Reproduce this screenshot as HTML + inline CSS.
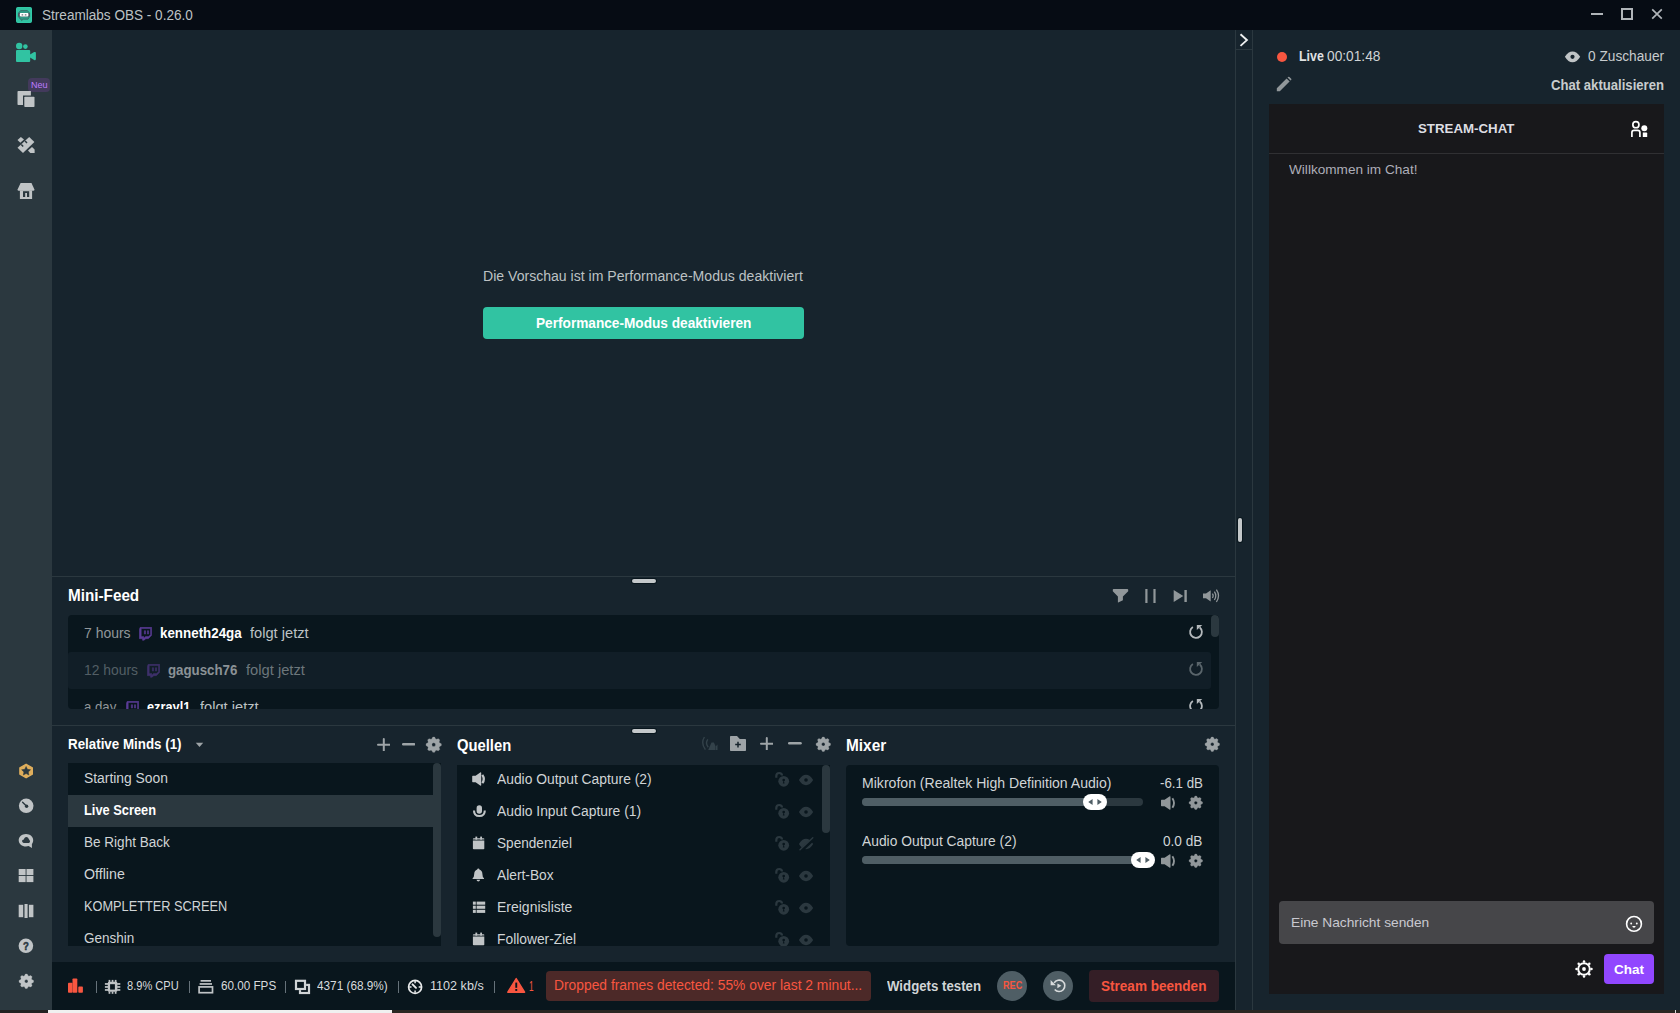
<!DOCTYPE html>
<html lang="de"><head><meta charset="utf-8"><title>Streamlabs OBS - 0.26.0</title>
<style>
html,body{margin:0;padding:0;}
body{width:1680px;height:1013px;overflow:hidden;background:#17242d;position:relative;font-family:"Liberation Sans",sans-serif;}
.b{position:absolute;display:block;}
.t{position:absolute;display:block;white-space:nowrap;transform-origin:0 50%;}
.clip{position:absolute;overflow:hidden;}
</style></head><body>
<main>
<div class="b" style="left:0px;top:0px;width:1680px;height:30px;background:#060c14;"></div>
<div class="b" style="left:0px;top:30px;width:52px;height:980px;background:#2b383f;"></div>
<div class="b" style="left:52px;top:576px;width:1183px;height:1px;background:#2b383f;"></div>
<div class="b" style="left:52px;top:725px;width:1183px;height:1px;background:#2b383f;"></div>
<div class="b" style="left:1235px;top:30px;width:1px;height:980px;background:#2b383f;"></div>
<div class="b" style="left:1252px;top:30px;width:1px;height:980px;background:#2b383f;"></div>
<div class="b" style="left:1235px;top:49px;width:17px;height:1px;background:#2b383f;"></div>
<div class="b" style="left:631px;top:578px;width:26px;height:6px;background:#09161d;border-radius:3px;"></div>
<div class="b" style="left:632px;top:579px;width:24px;height:4px;background:#c4c8ca;border-radius:2px;"></div>
<div class="b" style="left:631px;top:728px;width:26px;height:6px;background:#09161d;border-radius:3px;"></div>
<div class="b" style="left:632px;top:729px;width:24px;height:4px;background:#c4c8ca;border-radius:2px;"></div>
<div class="b" style="left:1237px;top:517px;width:6px;height:26px;background:#09161d;border-radius:3px;"></div>
<div class="b" style="left:1238px;top:518px;width:4px;height:24px;background:#c4c8ca;border-radius:2px;"></div>
<div class="b" style="left:52px;top:962px;width:1183px;height:48px;background:#09161d;"></div>
<div class="b" style="left:0px;top:1010px;width:1680px;height:3px;background:#2a2622;"></div>
<div class="b" style="left:0px;top:1010px;width:48px;height:3px;background:#222222;"></div>
<div class="b" style="left:48px;top:1010px;width:344px;height:3px;background:#f0f0f0;"></div>
<div class="b" style="left:1675px;top:1010px;width:1px;height:3px;background:#d8d8d8;"></div>
<span class="t" style="left:483.35px;top:267.15px;font-size:14px;line-height:18px;color:#bdc2c4;transform:scaleX(1.0052);">Die Vorschau ist im Performance-Modus deaktiviert</span>
<div class="b" style="left:483px;top:307px;width:321px;height:32px;background:#31c3a2;border-radius:4px;"></div>
<span class="t" style="left:535.85px;top:314.15px;font-size:14px;line-height:18px;color:#ffffff;transform:scaleX(0.9748);font-weight:700;">Performance-Modus deaktivieren</span>
</main>
<header>
<svg class="b" style="left:16.0px;top:7.0px;" width="16" height="16" viewBox="0 0 16 16"><rect x="0" y="0" width="16" height="16" rx="2" fill="#35d0ad"/><rect x="0.6" y="0.6" width="14.8" height="14.8" rx="1.6" fill="#31c3a2"/><path d="M4.6 3.6h6.8l2.2 2.4v3.6l-1.6 2.6H7.2L5.6 13.6 5.2 12.2H4.4L2.4 9.6V6z" fill="#2e9985" stroke="#3a5a5c" stroke-width="0.7"/><rect x="2.2" y="6" width="11.6" height="3.6" rx="1.2" fill="#4a5560"/><rect x="3.8" y="6.1" width="8.6" height="3.3" rx="0.8" fill="#ffffff"/><path d="M5.6 7.2h1.6v1.2H5.6zM8.8 7.2h1.6v1.2H8.8z" fill="#6a7278"/></svg>
<span class="t" style="left:41.80px;top:6.15px;font-size:14px;line-height:18px;color:#bdc2c4;transform:scaleX(0.9690);">Streamlabs OBS - 0.26.0</span>
<div class="b" style="left:1591px;top:13px;width:12px;height:2px;background:#b0b5b9;"></div>
<div class="b" style="left:1621px;top:8px;width:8px;height:8px;border:2px solid #b0b5b9;"></div>
<svg class="b" style="left:1650.0px;top:7.0px;" width="14" height="14" viewBox="0 0 14 14"><path d="M2.2 2.4L11.8 11.6M11.8 2.4L2.2 11.6" stroke="#b0b5b9" stroke-width="1.7" fill="none"/></svg>
</header>
<nav>
<svg class="b" style="left:14.0px;top:40.0px;" width="24" height="24" viewBox="14 40 24 24"><circle cx="19.2" cy="46" r="3.2" fill="#31c3a2"/><circle cx="25.4" cy="46.6" r="2.3" fill="#31c3a2"/><rect x="16" y="50" width="14.2" height="12" rx="1" fill="#31c3a2"/><path d="M30 54.6L34.2 52.1Q35.9 51.4 35.9 53V59Q35.9 60.7 34.2 59.9L30 57.4Z" fill="#31c3a2"/></svg>
<div class="b" style="left:28px;top:78px;width:22px;height:14px;background:#433a5c;border-radius:4px;"></div>
<span class="t" style="left:30.50px;top:78.71px;font-size:9.5px;line-height:12px;color:#bd7bff;transform:scaleX(0.9528);">Neu</span>
<svg class="b" style="left:16.0px;top:90.0px;" width="20" height="18" viewBox="16 90 20 18"><path d="M18.3 91H30.9V95.6H23V105H18.3Q17.5 105 17.5 104.2V91.8Q17.5 91 18.3 91Z" fill="#c0c4c6"/><rect x="24.3" y="96.8" width="10.2" height="10.2" rx="0.8" fill="#c0c4c6"/></svg>
<svg class="b" style="left:16.0px;top:135.0px;" width="20" height="20" viewBox="16 135 20 20"><path d="M17.5 147.7L29.200 136.900L34.400 141.900L23 152.900Z" fill="#c0c4c6"/><path d="M21.300 144.600L23.200 146.600M25.100 140.900L27 142.900" stroke="#2b383f" stroke-width="1.5" fill="none"/><path d="M17.500 140L20.900 136.900L24 139.500L20.300 142.700Z" fill="#c0c4c6"/><path d="M28 150.500L32 147L34.600 149.600V153H30.300Z" fill="#c0c4c6"/></svg>
<svg class="b" style="left:16.0px;top:182.0px;" width="20" height="18" viewBox="16 182 20 18"><path d="M20.600 182.900H31.500L34.300 189.200Q34.700 190.800 33.200 190.800H18.800Q17.300 190.800 17.700 189.200Z" fill="#c0c4c6"/><rect x="19.900" y="190.400" width="12.200" height="8.600" fill="#c0c4c6"/><rect x="23" y="191.200" width="6.200" height="5.800" fill="#2b383f"/><rect x="25.200" y="193" width="1.800" height="4.200" fill="#c0c4c6"/></svg>
<svg class="b" style="left:17.0px;top:762.0px;" width="18" height="18" viewBox="17 762 18 18"><polygon points="26.1,764.3 32.3,767.8 32.3,774.2 26.1,777.7 19.9,774.2 19.9,767.8" fill="#dfae5c" stroke="#dfae5c" stroke-width="1.4" stroke-linejoin="round"/><polygon points="26.10,766.50 27.45,769.34 30.57,769.75 28.29,771.91 28.86,775.00 26.10,773.50 23.34,775.00 23.91,771.91 21.63,769.75 24.75,769.34" fill="#2b383f" stroke="#2b383f" stroke-width="0.5" stroke-linejoin="round"/></svg>
<svg class="b" style="left:17.0px;top:797.0px;" width="18" height="18" viewBox="17 797 18 18"><circle cx="26.2" cy="805.8" r="7.3" fill="#c0c4c6"/><circle cx="26.6" cy="806.3" r="1.7" fill="#2b383f"/><path d="M26.6 806.3L22.6 802.3" stroke="#2b383f" stroke-width="1.4" stroke-linecap="round"/></svg>
<svg class="b" style="left:17.0px;top:832.0px;" width="18" height="18" viewBox="17 832 18 18"><path d="M26 833.9C30.100 833.900 33.200 836.700 33.200 840.200C33.200 841.600 32.700 842.900 31.900 843.900L31.900 848.100L28.600 846.100C27.800 846.400 26.900 846.500 26 846.500C21.900 846.500 18.700 843.700 18.700 840.200C18.700 836.700 21.900 833.900 26 833.900Z" fill="#c0c4c6"/><path d="M23.900 842.900C22.800 842.900 22.100 842.100 22.100 841.100C22.100 840.100 22.900 839.300 23.900 839.400C24.200 838 25.100 837 26.300 837C27.500 837 28.200 837.700 28.700 838.900C29.500 839.900 30 840.600 30 841.400C30 842.300 29.300 842.900 28.400 842.900Z" fill="#2b383f"/></svg>
<svg class="b" style="left:18.0px;top:868.0px;" width="16" height="15" viewBox="18 868 16 15"><rect x="18.7" y="869" width="6.9" height="6.1" fill="#c0c4c6"/><rect x="26.5" y="869" width="6.9" height="6.1" fill="#c0c4c6"/><rect x="18.7" y="876" width="6.9" height="6.1" fill="#c0c4c6"/><rect x="26.5" y="876" width="6.9" height="6.1" fill="#c0c4c6"/></svg>
<svg class="b" style="left:18.0px;top:903.0px;" width="16" height="16" viewBox="18 903 16 16"><rect x="18.7" y="904.8" width="4.5" height="12.4" fill="#c0c4c6"/><rect x="24.5" y="904" width="3.1" height="14" fill="#c0c4c6"/><rect x="28.9" y="904.8" width="4.5" height="12.400" fill="#c0c4c6"/></svg>
<svg class="b" style="left:17.0px;top:937.0px;" width="18" height="18" viewBox="17 937 18 18"><circle cx="25.9" cy="945.8" r="7.3" fill="#c0c4c6"/></svg>
<span class="t" style="left:22.80px;top:938.99px;font-size:11px;line-height:14px;color:#2b383f;transform:scaleX(0.8778);font-weight:700;-webkit-text-stroke:0.5px #2b383f;">?</span>
<svg class="b" style="left:17.6px;top:972.7px;" width="16.60" height="16.60" viewBox="0 0 16.60 16.60"><path d="M6.46 2.83 L7.43 1.05 L9.17 1.05 L10.14 2.83 L10.87 3.14 L12.81 2.56 L14.04 3.79 L13.46 5.73 L13.77 6.46 L15.55 7.43 L15.55 9.17 L13.77 10.14 L13.46 10.87 L14.04 12.81 L12.81 14.04 L10.87 13.46 L10.14 13.77 L9.17 15.55 L7.43 15.55 L6.46 13.77 L5.73 13.46 L3.79 14.04 L2.56 12.81 L3.14 10.87 L2.83 10.14 L1.05 9.17 L1.05 7.43 L2.83 6.46 L3.14 5.73 L2.56 3.79 L3.79 2.56 L5.73 3.14Z M6.55 8.30 a1.75 1.75 0 1 0 3.50 0 a1.75 1.75 0 1 0 -3.50 0Z" fill="#c0c4c6" fill-rule="evenodd" stroke="#c0c4c6" stroke-width="0.3" stroke-linejoin="round"/></svg>
</nav>
<section>
<span class="t" style="left:68.00px;top:584.96px;font-size:16px;line-height:21px;color:#ffffff;transform:scaleX(0.9535);font-weight:700;">Mini-Feed</span>
<svg class="b" style="left:1112.0px;top:588.0px;" width="18" height="16" viewBox="1112 588 18 16"><path d="M1113.6 589H1127.4Q1128.2 589 1128.2 589.8V591.2L1122.9 596.6V600.2L1118.2 602.6Q1117.9 602.7 1117.9 602.3V596.6L1112.8 591.2V589.8Q1112.8 589 1113.6 589Z" fill="#91979a"/></svg>
<svg class="b" style="left:1144.0px;top:588.0px;" width="14" height="16" viewBox="1144 588 14 16"><rect x="1145.3" y="589" width="2.2" height="14" fill="#91979a"/><rect x="1153.4" y="589" width="2.2" height="14" fill="#91979a"/></svg>
<svg class="b" style="left:1173.0px;top:589.0px;" width="16" height="14" viewBox="1173 589 16 14"><path d="M1173.7 590L1183.3 596L1173.7 602Z" fill="#91979a"/><rect x="1184.4" y="590" width="2.4" height="12" fill="#91979a"/></svg>
<svg class="b" style="left:1202.0px;top:588.0px;" width="19" height="16" viewBox="1202 588 19 16"><path d="M1203 593.4H1206L1210.7 590.2V601.4L1206 598.2H1203Z" fill="#91979a"/><path d="M1212.4 593.6Q1213.9 595.8 1212.4 598M1214.4 591.6Q1217.2 595.8 1214.4 600M1216.4 589.6Q1220.6 595.8 1216.4 602" stroke="#91979a" stroke-width="1.3" fill="none"/></svg>
<div class="clip" style="left:68px;top:615px;width:1151px;height:94px;background:#09161d;border-radius:4px;">
<div class="b" style="left:0px;top:37px;width:1143px;height:37px;background:#111e27;border-radius:3px;"></div>
<div class="b" style="left:1143px;top:0px;width:8px;height:22px;background:#2b383f;border-radius:4px;"></div>
<span class="t" style="left:15.90px;top:9.15px;font-size:14px;line-height:18px;color:#91979a;transform:scaleX(0.9981);">7 hours</span>
<svg class="b" style="left:71.0px;top:12.0px;opacity:0.9;" width="13" height="13.6" viewBox="0 0 24 24"><path d="M2.149 0L.537 4.119v16.836h5.731V24h3.224l3.045-3.045h4.657l6.269-6.269V0H2.149zm19.164 13.612l-3.582 3.582H12l-3.045 3.045v-3.045H4.119V2.149h17.194v11.463zm-3.582-7.343v6.262h-2.149V6.269h2.149zm-5.731 0v6.262H9.851V6.269H12z" fill="#6441a4" stroke="#6441a4" stroke-width="0.9"/></svg>
<span class="t" style="left:92.40px;top:9.15px;font-size:14px;line-height:18px;color:#ffffff;transform:scaleX(0.9547);font-weight:700;">kenneth24ga</span>
<span class="t" style="left:182.40px;top:9.15px;font-size:14px;line-height:18px;color:#bdc2c4;transform:scaleX(1.0459);">folgt jetzt</span>
<svg class="b" style="left:1118.9px;top:8.200000000000045px;" width="18" height="18" viewBox="1186.9 623.2 18 18"><path d="M1192.77 627.20A5.9 5.9 0 1 0 1199.69 627.68" stroke="#b4b9bc" stroke-width="1.8" fill="none"/><path d="M1196.70 625.10H1202.20L1196.70 630.30Z" fill="#b4b9bc"/></svg>
<span class="t" style="left:16.20px;top:46.15px;font-size:14px;line-height:18px;color:#535e65;transform:scaleX(0.9910);">12 hours</span>
<svg class="b" style="left:79.0px;top:49.0px;opacity:0.55;" width="13" height="13.6" viewBox="0 0 24 24"><path d="M2.149 0L.537 4.119v16.836h5.731V24h3.224l3.045-3.045h4.657l6.269-6.269V0H2.149zm19.164 13.612l-3.582 3.582H12l-3.045 3.045v-3.045H4.119V2.149h17.194v11.463zm-3.582-7.343v6.262h-2.149V6.269h2.149zm-5.731 0v6.262H9.851V6.269H12z" fill="#6441a4" stroke="#6441a4" stroke-width="0.9"/></svg>
<span class="t" style="left:100.20px;top:46.15px;font-size:14px;line-height:18px;color:#8b9296;transform:scaleX(0.9489);font-weight:700;">gagusch76</span>
<span class="t" style="left:178.10px;top:46.15px;font-size:14px;line-height:18px;color:#6c767b;transform:scaleX(1.0513);">folgt jetzt</span>
<svg class="b" style="left:1118.9px;top:45.299999999999955px;" width="18" height="18" viewBox="1186.9 660.3 18 18"><path d="M1192.77 664.30A5.9 5.9 0 1 0 1199.69 664.78" stroke="#5a656b" stroke-width="1.8" fill="none"/><path d="M1196.70 662.20H1202.20L1196.70 667.40Z" fill="#5a656b"/></svg>
<span class="t" style="left:16.20px;top:83.15px;font-size:14px;line-height:18px;color:#91979a;transform:scaleX(0.9432);">a day</span>
<svg class="b" style="left:58.2px;top:86.0px;opacity:0.9;" width="13" height="13.6" viewBox="0 0 24 24"><path d="M2.149 0L.537 4.119v16.836h5.731V24h3.224l3.045-3.045h4.657l6.269-6.269V0H2.149zm19.164 13.612l-3.582 3.582H12l-3.045 3.045v-3.045H4.119V2.149h17.194v11.463zm-3.582-7.343v6.262h-2.149V6.269h2.149zm-5.731 0v6.262H9.851V6.269H12z" fill="#6441a4" stroke="#6441a4" stroke-width="0.9"/></svg>
<span class="t" style="left:79.40px;top:83.15px;font-size:14px;line-height:18px;color:#ffffff;transform:scaleX(0.9118);font-weight:700;">ezrayl1</span>
<span class="t" style="left:132.40px;top:83.15px;font-size:14px;line-height:18px;color:#bdc2c4;transform:scaleX(1.0459);">folgt jetzt</span>
<svg class="b" style="left:1118.9px;top:82.29999999999995px;" width="18" height="18" viewBox="1186.9 697.3 18 18"><path d="M1192.77 701.30A5.9 5.9 0 1 0 1199.69 701.78" stroke="#b4b9bc" stroke-width="1.8" fill="none"/><path d="M1196.70 699.20H1202.20L1196.70 704.40Z" fill="#b4b9bc"/></svg>
</div>
</section>
<section>
<span class="t" style="left:68.00px;top:735.35px;font-size:14px;line-height:18px;color:#ffffff;transform:scaleX(0.9536);font-weight:700;">Relative Minds (1)</span>
<svg class="b" style="left:195.0px;top:742.4px;" width="9" height="6" viewBox="0 0 9 6"><path d="M0.8 0.8H8.2L4.5 5Z" fill="#9ea4a7"/></svg>
<svg class="b" style="left:376.6px;top:737.7px;" width="13.6" height="13.6" viewBox="0 0 13.6 13.6"><path d="M6.8 1V12.6M1 6.8H12.6" stroke="#9ea4a7" stroke-width="2" stroke-linecap="round" fill="none"/></svg>
<svg class="b" style="left:401.8px;top:743.3px;" width="13.4" height="2.4" viewBox="0 0 13.4 2.4"><rect width="13.4" height="2.4" rx="1.2" fill="#9ea4a7"/></svg>
<svg class="b" style="left:424.9px;top:735.7px;" width="17.40" height="17.40" viewBox="0 0 17.40 17.40"><path d="M6.76 2.93 L7.79 1.05 L9.61 1.05 L10.64 2.93 L11.41 3.25 L13.46 2.65 L14.75 3.94 L14.15 5.99 L14.47 6.76 L16.35 7.79 L16.35 9.61 L14.47 10.64 L14.15 11.41 L14.75 13.46 L13.46 14.75 L11.41 14.15 L10.64 14.47 L9.61 16.35 L7.79 16.35 L6.76 14.47 L5.99 14.15 L3.94 14.75 L2.65 13.46 L3.25 11.41 L2.93 10.64 L1.05 9.61 L1.05 7.79 L2.93 6.76 L3.25 5.99 L2.65 3.94 L3.94 2.65 L5.99 3.25Z M6.85 8.70 a1.85 1.85 0 1 0 3.70 0 a1.85 1.85 0 1 0 -3.70 0Z" fill="#9ea4a7" fill-rule="evenodd" stroke="#9ea4a7" stroke-width="0.3" stroke-linejoin="round"/></svg>
<div class="clip" style="left:68px;top:763px;width:373px;height:183px;background:#09161d;">
<div class="b" style="left:0px;top:32px;width:365px;height:32px;background:#2b383f;"></div>
<div class="b" style="left:365px;top:0px;width:8px;height:174px;background:#2b383f;border-radius:4px;"></div>
<span class="t" style="left:16.20px;top:6.15px;font-size:14px;line-height:18px;color:#d0d4d6;transform:scaleX(0.9901);">Starting Soon</span>
<span class="t" style="left:16.20px;top:38.15px;font-size:14px;line-height:18px;color:#ffffff;transform:scaleX(0.9161);font-weight:700;">Live Screen</span>
<span class="t" style="left:16.20px;top:70.15px;font-size:14px;line-height:18px;color:#d0d4d6;transform:scaleX(0.9670);">Be Right Back</span>
<span class="t" style="left:16.20px;top:102.15px;font-size:14px;line-height:18px;color:#d0d4d6;transform:scaleX(1.0147);">Offline</span>
<span class="t" style="left:16.20px;top:134.15px;font-size:14px;line-height:18px;color:#d0d4d6;transform:scaleX(0.9119);">KOMPLETTER SCREEN</span>
<span class="t" style="left:16.20px;top:166.15px;font-size:14px;line-height:18px;color:#d0d4d6;transform:scaleX(0.9645);">Genshin</span>
</div>
</section>
<section>
<span class="t" style="left:457.00px;top:735.16px;font-size:16px;line-height:21px;color:#ffffff;transform:scaleX(0.9238);font-weight:700;">Quellen</span>
<svg class="b" style="left:701.0px;top:735.0px;" width="18" height="17" viewBox="701 735 18 17"><path d="M704.4 737Q700.6 743.2 705.4 749.6M707.8 739.4Q705 743.4 708.2 747.2" stroke="#33424a" stroke-width="1.4" fill="none"/><path d="M708.2 750L711.5 742.4H713.9L715.400 746V750Z" fill="#33424a"/><path d="M715.7 746.6L717.5 744.6V750H715.700Z" fill="#33424a"/></svg>
<svg class="b" style="left:729.0px;top:735.0px;" width="18" height="17" viewBox="729 735 18 17"><path d="M730.8 736H737L739.8 739H745.2Q746 739 746 739.8V750.2Q746 751 745.2 751H730.8Q730 751 730 750.2V736.8Q730 736 730.8 736Z" fill="#9ea4a7"/><path d="M738 741.8V747.4M735.2 744.6H740.8" stroke="#17242d" stroke-width="1.5" fill="none"/></svg>
<svg class="b" style="left:759.8px;top:736.7px;" width="13.6" height="13.6" viewBox="0 0 13.6 13.6"><path d="M6.8 1V12.6M1 6.8H12.6" stroke="#9ea4a7" stroke-width="2" stroke-linecap="round" fill="none"/></svg>
<svg class="b" style="left:788.1px;top:742.4px;" width="13.8" height="2.4" viewBox="0 0 13.8 2.4"><rect width="13.8" height="2.4" rx="1.2" fill="#9ea4a7"/></svg>
<svg class="b" style="left:814.7px;top:735.7px;" width="16.60" height="16.60" viewBox="0 0 16.60 16.60"><path d="M6.46 2.83 L7.43 1.05 L9.17 1.05 L10.14 2.83 L10.87 3.14 L12.81 2.56 L14.04 3.79 L13.46 5.73 L13.77 6.46 L15.55 7.43 L15.55 9.17 L13.77 10.14 L13.46 10.87 L14.04 12.81 L12.81 14.04 L10.87 13.46 L10.14 13.77 L9.17 15.55 L7.43 15.55 L6.46 13.77 L5.73 13.46 L3.79 14.04 L2.56 12.81 L3.14 10.87 L2.83 10.14 L1.05 9.17 L1.05 7.43 L2.83 6.46 L3.14 5.73 L2.56 3.79 L3.79 2.56 L5.73 3.14Z M6.55 8.30 a1.75 1.75 0 1 0 3.50 0 a1.75 1.75 0 1 0 -3.50 0Z" fill="#9ea4a7" fill-rule="evenodd" stroke="#9ea4a7" stroke-width="0.3" stroke-linejoin="round"/></svg>
<div class="clip" style="left:457px;top:765px;width:373px;height:181px;background:#09161d;">
<div class="b" style="left:365px;top:0px;width:8px;height:68px;background:#2b383f;border-radius:4px;"></div>
<span class="t" style="left:40.10px;top:5.15px;font-size:14px;line-height:18px;color:#d0d4d6;transform:scaleX(0.9884);">Audio Output Capture (2)</span>
<svg class="b" style="left:14.0px;top:5.600000000000023px;" width="16" height="16" viewBox="471 770.6 16 16"><path d="M472.2 776.0Q472.2 775.4 472.8 775.4H475.6L480.2 772.1Q481.2 771.6 481.2 772.7V784.5Q481.2 785.6 480.2 785.1L475.6 781.8000000000001H472.8Q472.2 781.8000000000001 472.2 781.2Z" fill="#c0c4c6"/><path d="M482.3 774.4Q485.3 778.6 482.3 782.8000000000001" stroke="#c0c4c6" stroke-width="2.3" fill="none"/></svg>
<svg class="b" style="left:317.0px;top:6.0px;" width="17" height="17" viewBox="774 771 17 17"><path d="M776.3 777.8V776Q776.3 773 779.2 773Q782 773 782 775.6" stroke="#2b383f" stroke-width="2.2" fill="none"/><circle cx="783.7" cy="781.3" r="5.4" fill="#2b383f"/><circle cx="783.7" cy="780" r="1.3" fill="#09161d"/><path d="M783.7 780L784.6 783.4H782.8Z" fill="#09161d"/></svg>
<svg class="b" style="left:341.0px;top:8.0px;" width="17" height="14" viewBox="798 773 17 14"><path d="M798.9 780Q802 774.8 806 774.8Q810 774.8 813.2 780Q810 785.2 806 785.2Q802 785.2 798.9 780Z" fill="#2b383f"/><circle cx="806" cy="780" r="1.8" fill="#09161d"/></svg>
<span class="t" style="left:40.10px;top:37.15px;font-size:14px;line-height:18px;color:#d0d4d6;transform:scaleX(0.9902);">Audio Input Capture (1)</span>
<svg class="b" style="left:14.0px;top:38.299999999999955px;" width="16" height="16" viewBox="471 803.3 16 16"><rect x="476.6" y="805.5" width="5.4" height="8.6" rx="2.7" fill="#c0c4c6"/><path d="M474 810.6999999999999Q474 816.3 479.3 816.3Q484.8 816.3 484.8 810.6999999999999" stroke="#c0c4c6" stroke-width="2.1" fill="none"/></svg>
<svg class="b" style="left:317.0px;top:38.0px;" width="17" height="17" viewBox="774 803 17 17"><path d="M776.3 809.8V808Q776.3 805 779.2 805Q782 805 782 807.6" stroke="#2b383f" stroke-width="2.2" fill="none"/><circle cx="783.7" cy="813.3" r="5.4" fill="#2b383f"/><circle cx="783.7" cy="812" r="1.3" fill="#09161d"/><path d="M783.7 812L784.6 815.4H782.8Z" fill="#09161d"/></svg>
<svg class="b" style="left:341.0px;top:40.0px;" width="17" height="14" viewBox="798 805 17 14"><path d="M798.9 812Q802 806.8 806 806.8Q810 806.8 813.2 812Q810 817.2 806 817.2Q802 817.2 798.9 812Z" fill="#2b383f"/><circle cx="806" cy="812" r="1.8" fill="#09161d"/></svg>
<span class="t" style="left:40.10px;top:69.15px;font-size:14px;line-height:18px;color:#d0d4d6;transform:scaleX(0.9720);">Spendenziel</span>
<svg class="b" style="left:14.0px;top:70.29999999999995px;" width="16" height="16" viewBox="471 835.3 16 16"><rect x="475.4" y="836.9" width="1.8" height="3" fill="#c0c4c6"/><rect x="480.2" y="836.9" width="1.8" height="3" fill="#c0c4c6"/><path d="M473.7 838.5H483.5Q484.3 838.5 484.3 839.3V839.9H472.9V839.3Q472.9 838.5 473.7 838.5Z" fill="#c0c4c6"/><path d="M472.9 840.6999999999999H484.3V848.6999999999999Q484.3 849.5 483.5 849.5H473.7Q472.9 849.5 472.9 848.6999999999999Z" fill="#c0c4c6"/></svg>
<svg class="b" style="left:317.0px;top:70.0px;" width="17" height="17" viewBox="774 835 17 17"><path d="M776.3 841.8V840Q776.3 837 779.2 837Q782 837 782 839.6" stroke="#2b383f" stroke-width="2.2" fill="none"/><circle cx="783.7" cy="845.3" r="5.4" fill="#2b383f"/><circle cx="783.7" cy="844" r="1.3" fill="#09161d"/><path d="M783.7 844L784.6 847.4H782.8Z" fill="#09161d"/></svg>
<svg class="b" style="left:341.0px;top:71.39999999999998px;" width="17" height="16" viewBox="798 836.4 17 16"><path d="M798.9 844.4Q802 839.1999999999999 806 839.1999999999999Q810 839.1999999999999 813.2 844.4Q810 849.6 806 849.6Q802 849.6 798.9 844.4Z" fill="#2b383f"/><path d="M814.2 838.8L801.2 850.8" stroke="#09161d" stroke-width="3.4"/><path d="M812.8 838.1999999999999L800 850.1999999999999" stroke="#2b383f" stroke-width="1.5" stroke-linecap="round"/></svg>
<span class="t" style="left:40.10px;top:101.15px;font-size:14px;line-height:18px;color:#d0d4d6;transform:scaleX(0.9832);">Alert-Box</span>
<svg class="b" style="left:14.0px;top:102.29999999999995px;" width="16" height="16" viewBox="471 867.3 16 16"><path d="M478.3 868.6999999999999Q479.3 868.6999999999999 479.4 869.6999999999999Q482.4 870.6999999999999 482.4 874.3Q482.4 877.3 484 878.5V879.1999999999999H472.6V878.5Q474.2 877.3 474.2 874.3Q474.2 870.6999999999999 477.2 869.6999999999999Q477.3 868.6999999999999 478.3 868.6999999999999Z" fill="#c0c4c6"/><path d="M476.5 880.0999999999999H480.1Q479.8 881.6999999999999 478.3 881.6999999999999Q476.8 881.6999999999999 476.5 880.0999999999999Z" fill="#c0c4c6"/></svg>
<svg class="b" style="left:317.0px;top:102.0px;" width="17" height="17" viewBox="774 867 17 17"><path d="M776.3 873.8V872Q776.3 869 779.2 869Q782 869 782 871.6" stroke="#2b383f" stroke-width="2.2" fill="none"/><circle cx="783.7" cy="877.3" r="5.4" fill="#2b383f"/><circle cx="783.7" cy="876" r="1.3" fill="#09161d"/><path d="M783.7 876L784.6 879.4H782.8Z" fill="#09161d"/></svg>
<svg class="b" style="left:341.0px;top:104.0px;" width="17" height="14" viewBox="798 869 17 14"><path d="M798.9 876Q802 870.8 806 870.8Q810 870.8 813.2 876Q810 881.2 806 881.2Q802 881.2 798.9 876Z" fill="#2b383f"/><circle cx="806" cy="876" r="1.8" fill="#09161d"/></svg>
<span class="t" style="left:40.10px;top:133.15px;font-size:14px;line-height:18px;color:#d0d4d6;transform:scaleX(0.9990);">Ereignisliste</span>
<svg class="b" style="left:14.0px;top:135.20000000000005px;" width="16" height="16" viewBox="471 900.2 16 16"><rect x="472.9" y="901.80" width="2.9" height="3.1" fill="#c0c4c6"/><rect x="476.6" y="901.80" width="8.6" height="3.1" fill="#c0c4c6"/><rect x="472.9" y="905.90" width="2.9" height="3.1" fill="#c0c4c6"/><rect x="476.6" y="905.90" width="8.6" height="3.1" fill="#c0c4c6"/><rect x="472.9" y="910.00" width="2.9" height="3.1" fill="#c0c4c6"/><rect x="476.6" y="910.00" width="8.6" height="3.1" fill="#c0c4c6"/></svg>
<svg class="b" style="left:317.0px;top:134.0px;" width="17" height="17" viewBox="774 899 17 17"><path d="M776.3 905.8V904Q776.3 901 779.2 901Q782 901 782 903.6" stroke="#2b383f" stroke-width="2.2" fill="none"/><circle cx="783.7" cy="909.3" r="5.4" fill="#2b383f"/><circle cx="783.7" cy="908" r="1.3" fill="#09161d"/><path d="M783.7 908L784.6 911.4H782.8Z" fill="#09161d"/></svg>
<svg class="b" style="left:341.0px;top:136.0px;" width="17" height="14" viewBox="798 901 17 14"><path d="M798.9 908Q802 902.8 806 902.8Q810 902.8 813.2 908Q810 913.2 806 913.2Q802 913.2 798.9 908Z" fill="#2b383f"/><circle cx="806" cy="908" r="1.8" fill="#09161d"/></svg>
<span class="t" style="left:40.10px;top:165.15px;font-size:14px;line-height:18px;color:#d0d4d6;transform:scaleX(0.9872);">Follower-Ziel</span>
<svg class="b" style="left:14.0px;top:166.29999999999995px;" width="16" height="16" viewBox="471 931.3 16 16"><rect x="475.4" y="932.9" width="1.8" height="3" fill="#c0c4c6"/><rect x="480.2" y="932.9" width="1.8" height="3" fill="#c0c4c6"/><path d="M473.7 934.5H483.5Q484.3 934.5 484.3 935.3V935.9H472.9V935.3Q472.9 934.5 473.7 934.5Z" fill="#c0c4c6"/><path d="M472.9 936.6999999999999H484.3V944.6999999999999Q484.3 945.5 483.5 945.5H473.7Q472.9 945.5 472.9 944.6999999999999Z" fill="#c0c4c6"/></svg>
<svg class="b" style="left:317.0px;top:166.0px;" width="17" height="17" viewBox="774 931 17 17"><path d="M776.3 937.8V936Q776.3 933 779.2 933Q782 933 782 935.6" stroke="#2b383f" stroke-width="2.2" fill="none"/><circle cx="783.7" cy="941.3" r="5.4" fill="#2b383f"/><circle cx="783.7" cy="940" r="1.3" fill="#09161d"/><path d="M783.7 940L784.6 943.4H782.8Z" fill="#09161d"/></svg>
<svg class="b" style="left:341.0px;top:168.0px;" width="17" height="14" viewBox="798 933 17 14"><path d="M798.9 940Q802 934.8 806 934.8Q810 934.8 813.2 940Q810 945.2 806 945.2Q802 945.2 798.9 940Z" fill="#2b383f"/><circle cx="806" cy="940" r="1.8" fill="#09161d"/></svg>
</div>
</section>
<section>
<span class="t" style="left:846.00px;top:735.16px;font-size:16px;line-height:21px;color:#ffffff;transform:scaleX(0.9619);font-weight:700;">Mixer</span>
<svg class="b" style="left:1203.7px;top:735.7px;" width="16.60" height="16.60" viewBox="0 0 16.60 16.60"><path d="M6.46 2.83 L7.43 1.05 L9.17 1.05 L10.14 2.83 L10.87 3.14 L12.81 2.56 L14.04 3.79 L13.46 5.73 L13.77 6.46 L15.55 7.43 L15.55 9.17 L13.77 10.14 L13.46 10.87 L14.04 12.81 L12.81 14.04 L10.87 13.46 L10.14 13.77 L9.17 15.55 L7.43 15.55 L6.46 13.77 L5.73 13.46 L3.79 14.04 L2.56 12.81 L3.14 10.87 L2.83 10.14 L1.05 9.17 L1.05 7.43 L2.83 6.46 L3.14 5.73 L2.56 3.79 L3.79 2.56 L5.73 3.14Z M6.55 8.30 a1.75 1.75 0 1 0 3.50 0 a1.75 1.75 0 1 0 -3.50 0Z" fill="#9ea4a7" fill-rule="evenodd" stroke="#9ea4a7" stroke-width="0.3" stroke-linejoin="round"/></svg>
<div class="b" style="left:846px;top:765px;width:373px;height:181px;background:#09161d;border-radius:4px;"></div>
<span class="t" style="left:862.20px;top:774.15px;font-size:14px;line-height:18px;color:#d0d4d6;transform:scaleX(1.0051);">Mikrofon (Realtek High Definition Audio)</span>
<span class="t" style="left:1159.80px;top:774.15px;font-size:14px;line-height:18px;color:#d0d4d6;transform:scaleX(0.9527);">-6.1 dB</span>
<div class="b" style="left:862px;top:798px;width:281px;height:8px;background:#2b383f;border-radius:4px;"></div>
<div class="b" style="left:862px;top:798px;width:233px;height:8px;background:#4f5e65;border-radius:4px;"></div>
<div class="b" style="left:1083px;top:794px;width:24px;height:16px;background:#ffffff;border-radius:8px;"></div>
<svg class="b" style="left:1083.0px;top:794.0px;" width="24" height="16" viewBox="0 0 24 16"><path d="M9.6 5V11L5.2 8ZM14.4 5V11L18.8 8Z" fill="#4f5e65"/></svg>
<svg class="b" style="left:1160.2px;top:794.8px;" width="18" height="16" viewBox="1160.2 794.8 18 16"><path d="M1161.2 800.1999999999999Q1161.2 799.5999999999999 1161.8 799.5999999999999H1164.8L1169.6000000000001 796.1999999999999Q1170.7 795.5999999999999 1170.7 796.8V808.8Q1170.7 810.0 1169.6000000000001 809.4L1164.8 806.0H1161.8Q1161.2 806.0 1161.2 805.4Z" fill="#91979a"/><path d="M1172.6000000000001 798.0Q1175.8 802.8 1172.6000000000001 807.5999999999999" stroke="#91979a" stroke-width="1.9" fill="none"/></svg>
<svg class="b" style="left:1188.2px;top:795.2px;" width="15.60" height="15.60" viewBox="0 0 15.60 15.60"><path d="M6.09 2.71 L6.99 1.05 L8.61 1.05 L9.51 2.71 L10.19 2.99 L12.00 2.46 L13.14 3.60 L12.61 5.41 L12.89 6.09 L14.55 6.99 L14.55 8.61 L12.89 9.51 L12.61 10.19 L13.14 12.00 L12.00 13.14 L10.19 12.61 L9.51 12.89 L8.61 14.55 L6.99 14.55 L6.09 12.89 L5.41 12.61 L3.60 13.14 L2.46 12.00 L2.99 10.19 L2.71 9.51 L1.05 8.61 L1.05 6.99 L2.71 6.09 L2.99 5.41 L2.46 3.60 L3.60 2.46 L5.41 2.99Z M6.17 7.80 a1.63 1.63 0 1 0 3.26 0 a1.63 1.63 0 1 0 -3.26 0Z" fill="#91979a" fill-rule="evenodd" stroke="#91979a" stroke-width="0.3" stroke-linejoin="round"/></svg>
<span class="t" style="left:862.20px;top:832.15px;font-size:14px;line-height:18px;color:#d0d4d6;transform:scaleX(0.9877);">Audio Output Capture (2)</span>
<span class="t" style="left:1163.40px;top:832.15px;font-size:14px;line-height:18px;color:#d0d4d6;transform:scaleX(0.9735);">0.0 dB</span>
<div class="b" style="left:862px;top:856.2px;width:281px;height:8px;background:#2b383f;border-radius:4px;"></div>
<div class="b" style="left:862px;top:856.2px;width:281px;height:8px;background:#4f5e65;border-radius:4px;"></div>
<div class="b" style="left:1131px;top:852.2px;width:24px;height:16px;background:#ffffff;border-radius:8px;"></div>
<svg class="b" style="left:1131.0px;top:852.2px;" width="24" height="16" viewBox="0 0 24 16"><path d="M9.6 5V11L5.2 8ZM14.4 5V11L18.8 8Z" fill="#4f5e65"/></svg>
<svg class="b" style="left:1160.2px;top:853.0px;" width="18" height="16" viewBox="1160.2 853.0 18 16"><path d="M1161.2 858.4Q1161.2 857.8 1161.8 857.8H1164.8L1169.6000000000001 854.4Q1170.7 853.8 1170.7 855.0V867.0Q1170.7 868.2 1169.6000000000001 867.6L1164.8 864.2H1161.8Q1161.2 864.2 1161.2 863.6Z" fill="#91979a"/><path d="M1172.6000000000001 856.2Q1175.8 861.0 1172.6000000000001 865.8" stroke="#91979a" stroke-width="1.9" fill="none"/></svg>
<svg class="b" style="left:1188.2px;top:853.4px;" width="15.60" height="15.60" viewBox="0 0 15.60 15.60"><path d="M6.09 2.71 L6.99 1.05 L8.61 1.05 L9.51 2.71 L10.19 2.99 L12.00 2.46 L13.14 3.60 L12.61 5.41 L12.89 6.09 L14.55 6.99 L14.55 8.61 L12.89 9.51 L12.61 10.19 L13.14 12.00 L12.00 13.14 L10.19 12.61 L9.51 12.89 L8.61 14.55 L6.99 14.55 L6.09 12.89 L5.41 12.61 L3.60 13.14 L2.46 12.00 L2.99 10.19 L2.71 9.51 L1.05 8.61 L1.05 6.99 L2.71 6.09 L2.99 5.41 L2.46 3.60 L3.60 2.46 L5.41 2.99Z M6.17 7.80 a1.63 1.63 0 1 0 3.26 0 a1.63 1.63 0 1 0 -3.26 0Z" fill="#91979a" fill-rule="evenodd" stroke="#91979a" stroke-width="0.3" stroke-linejoin="round"/></svg>
</section>
<footer>
<svg class="b" style="left:67.0px;top:977.0px;" width="17" height="17" viewBox="67 977 17 17"><rect x="68" y="982.8" width="4.5" height="10" rx="0.8" fill="#f85640"/><rect x="72.5" y="978.5" width="4.8" height="14.3" rx="0.8" fill="#f85640"/><rect x="78.3" y="986.6" width="4.6" height="6.2" rx="0.8" fill="#f85640"/></svg>
<div class="b" style="left:96px;top:981px;width:1px;height:12px;background:#66727a;"></div>
<div class="b" style="left:189px;top:981px;width:1px;height:12px;background:#66727a;"></div>
<div class="b" style="left:285px;top:981px;width:1px;height:12px;background:#66727a;"></div>
<div class="b" style="left:398px;top:981px;width:1px;height:12px;background:#66727a;"></div>
<div class="b" style="left:494px;top:981px;width:1px;height:12px;background:#66727a;"></div>
<svg class="b" style="left:104.0px;top:979.0px;" width="17" height="16" viewBox="104 979 17 16"><rect x="107.8" y="981.8" width="9.600" height="10" rx="1.400" fill="#c0c4c6"/><rect x="110.1" y="984.2" width="4.800" height="5.400" fill="#09161d"/><rect x="108.60" y="979.9" width="1.7" height="2.4" fill="#c0c4c6"/><rect x="108.60" y="991.4" width="1.7" height="2.4" fill="#c0c4c6"/><rect x="104.9" y="983.10" width="3.2" height="1.700" fill="#c0c4c6"/><rect x="117.100" y="983.10" width="3.2" height="1.700" fill="#c0c4c6"/><rect x="111.70" y="979.9" width="1.7" height="2.4" fill="#c0c4c6"/><rect x="111.70" y="991.4" width="1.7" height="2.4" fill="#c0c4c6"/><rect x="104.9" y="986.10" width="3.2" height="1.700" fill="#c0c4c6"/><rect x="117.100" y="986.10" width="3.2" height="1.700" fill="#c0c4c6"/><rect x="114.80" y="979.9" width="1.7" height="2.4" fill="#c0c4c6"/><rect x="114.80" y="991.4" width="1.7" height="2.4" fill="#c0c4c6"/><rect x="104.9" y="989.10" width="3.2" height="1.700" fill="#c0c4c6"/><rect x="117.100" y="989.10" width="3.2" height="1.700" fill="#c0c4c6"/></svg>
<span class="t" style="left:127.40px;top:977.64px;font-size:12px;line-height:16px;color:#d8dbdd;transform:scaleX(0.9230);">8.9% CPU</span>
<svg class="b" style="left:197.0px;top:979.0px;" width="18" height="16" viewBox="197 979 18 16"><rect x="200.6" y="980" width="10.4" height="1.7" fill="#c0c4c6"/><rect x="199.6" y="983.1" width="12.4" height="1.7" fill="#c0c4c6"/><rect x="199.1" y="986.9" width="13.4" height="5.8" fill="none" stroke="#c0c4c6" stroke-width="1.7"/></svg>
<span class="t" style="left:220.80px;top:977.64px;font-size:12px;line-height:16px;color:#d8dbdd;transform:scaleX(0.9735);">60.00 FPS</span>
<svg class="b" style="left:293.0px;top:978.0px;" width="19" height="18" viewBox="293 978 19 18"><rect x="300" y="984.900" width="9" height="8.100" fill="none" stroke="#d0d4d6" stroke-width="2.200"/><rect x="294.900" y="979.700" width="11.200" height="10.400" fill="#09161d"/><rect x="296" y="980.800" width="9" height="8.200" fill="none" stroke="#d0d4d6" stroke-width="2.200"/></svg>
<span class="t" style="left:317.30px;top:977.64px;font-size:12px;line-height:16px;color:#d8dbdd;transform:scaleX(0.9813);">4371 (68.9%)</span>
<svg class="b" style="left:406.0px;top:978.0px;" width="18" height="18" viewBox="406 978 18 18"><circle cx="415.1" cy="986.9" r="6.5" fill="none" stroke="#e8eaeb" stroke-width="1.7"/><path d="M415.1 981V983.3M415.1 990.5V992.8M409.2 986.9H411.5M418.7 986.9H421" stroke="#e8eaeb" stroke-width="1.5" fill="none"/><path d="M416 987.8L412.5 984.3" stroke="#e8eaeb" stroke-width="1.900" stroke-linecap="round"/></svg>
<span class="t" style="left:430.30px;top:977.64px;font-size:12px;line-height:16px;color:#d8dbdd;transform:scaleX(1.0500);">1102 kb/s</span>
<svg class="b" style="left:506.0px;top:977.0px;" width="20" height="17" viewBox="506 977 20 17"><path d="M516.2 978.6L524.6 992.2H507.8Z" fill="#f85640" stroke="#f85640" stroke-width="1.4" stroke-linejoin="round"/><rect x="515.3" y="982.6" width="1.9" height="5.2" fill="#09161d"/><rect x="515.3" y="989" width="1.900" height="1.9" fill="#09161d"/></svg>
<span class="t" style="left:529.40px;top:976.75px;font-size:14px;line-height:18px;color:#f85640;transform:scaleX(0.5910);">1</span>
<div class="b" style="left:546px;top:971px;width:325px;height:30px;background:#4c2928;border-radius:4px;"></div>
<span class="t" style="left:554.30px;top:976.25px;font-size:14px;line-height:18px;color:#f85640;transform:scaleX(0.9877);">Dropped frames detected: 55% over last 2 minut...</span>
<span class="t" style="left:887.20px;top:977.15px;font-size:14px;line-height:18px;color:#d0d4d6;transform:scaleX(0.9453);font-weight:700;">Widgets testen</span>
<div class="b" style="left:997px;top:971px;width:30px;height:30px;background:#4f5e65;border-radius:15px;"></div>
<span class="t" style="left:1002.70px;top:979.14px;font-size:10px;line-height:13px;color:#f85640;transform:scaleX(0.9095);font-weight:700;">REC</span>
<div class="b" style="left:1043px;top:971px;width:30px;height:30px;background:#4f5e65;border-radius:15px;"></div>
<svg class="b" style="left:1048.0px;top:976.0px;" width="22" height="20" viewBox="1048 976 22 20"><path d="M1054.16 982.95A5.7 5.7 0 1 1 1054.73 989.46" stroke="#d8dbdc" stroke-width="1.6" fill="none"/><path d="M1050.6 980V985.2H1055.8Z" fill="#d8dbdc"/><path d="M1057.4 983.4L1061.4 985.8L1057.4 988.2Z" fill="#d8dbdc"/></svg>
<div class="b" style="left:1089px;top:970px;width:130px;height:32px;background:#341e26;border-radius:4px;"></div>
<span class="t" style="left:1101.20px;top:977.15px;font-size:14px;line-height:18px;color:#f85640;transform:scaleX(0.9677);font-weight:700;">Stream beenden</span>
</footer>
<aside>
<svg class="b" style="left:1237.0px;top:33.0px;" width="12" height="16" viewBox="1237 33 12 16"><path d="M1240.5 34.300L1246.900 40.100L1240.500 45.900" stroke="#eef0f1" stroke-width="1.9" fill="none"/></svg>
<div class="b" style="left:1276.8px;top:51.9px;width:10.4px;height:10.4px;background:#f85640;border-radius:5.2px;"></div>
<span class="t" style="left:1299.40px;top:47.15px;font-size:14px;line-height:18px;color:#e0e2e3;transform:scaleX(0.8853);font-weight:700;">Live</span>
<span class="t" style="left:1326.70px;top:47.15px;font-size:14px;line-height:18px;color:#d0d4d6;transform:scaleX(0.9798);">00:01:48</span>
<svg class="b" style="left:1564.0px;top:50.0px;" width="17" height="14" viewBox="1564 50 17 14"><path d="M1564.9 56.800Q1568.2 51.4 1572.500 51.4Q1576.800 51.4 1580.200 56.800Q1576.800 62.300 1572.500 62.300Q1568.200 62.300 1564.900 56.800Z" fill="#c0c4c6"/><circle cx="1572.5" cy="56.8" r="2.1" fill="#17242d"/></svg>
<span class="t" style="left:1587.70px;top:47.15px;font-size:14px;line-height:18px;color:#c8ccce;transform:scaleX(0.9778);">0 Zuschauer</span>
<svg class="b" style="left:1275.0px;top:75.0px;" width="18" height="18" viewBox="1275 75 18 18"><path d="M1276.800 88.300L1286.600 78.500L1289.600 81.500L1279.800 91.300H1276.800Z" fill="#91979a"/><path d="M1287.5 77.600L1288.200 76.900Q1288.800 76.400 1289.400 76.900L1291.200 78.700Q1291.700 79.300 1291.200 79.900L1290.500 80.600Z" fill="#91979a"/></svg>
<span class="t" style="left:1551.00px;top:75.95px;font-size:14px;line-height:18px;color:#c8ccce;transform:scaleX(0.9370);font-weight:700;">Chat aktualisieren</span>
<div class="b" style="left:1269px;top:104px;width:395px;height:890px;background:#18181b;"></div>
<div class="b" style="left:1269px;top:153px;width:395px;height:1px;background:#303033;"></div>
<span class="t" style="left:1417.80px;top:120.40px;font-size:13px;line-height:17px;color:#dedee3;transform:scaleX(1.0217);font-weight:700;">STREAM-CHAT</span>
<svg class="b" style="left:1629.0px;top:119.0px;" width="20" height="20" viewBox="1629 119 20 20"><circle cx="1635.9" cy="124.700" r="3.050" fill="none" stroke="#ffffff" stroke-width="1.700"/><path d="M1631.900 137V132.600Q1631.900 130.400 1634.100 130.400H1637.700Q1639.900 130.400 1639.900 132.600V137" fill="none" stroke="#ffffff" stroke-width="1.700"/><circle cx="1644.300" cy="128.300" r="3" fill="#ffffff"/><path d="M1642.8 132.400H1646.400Q1647.200 132.400 1647.200 133.200V137H1642.800Z" fill="#ffffff"/></svg>
<span class="t" style="left:1288.80px;top:161.00px;font-size:13px;line-height:17px;color:#adadb8;transform:scaleX(1.0464);">Willkommen im Chat!</span>
<div class="b" style="left:1279px;top:901px;width:375px;height:43px;background:#464649;border-radius:4px;"></div>
<span class="t" style="left:1290.70px;top:914.00px;font-size:13px;line-height:17px;color:#c9c9d0;transform:scaleX(1.0565);">Eine Nachricht senden</span>
<svg class="b" style="left:1624.0px;top:914.0px;" width="20" height="20" viewBox="1624 914 20 20"><circle cx="1634" cy="923.900" r="7.400" fill="none" stroke="#ffffff" stroke-width="1.600"/><circle cx="1631.200" cy="923.500" r="0.950" fill="#ffffff"/><circle cx="1636.800" cy="923.500" r="0.950" fill="#ffffff"/><path d="M1632.300 925.900H1635.700Q1635.500 927.700 1634 927.700Q1632.500 927.700 1632.300 925.900Z" fill="#ffffff"/></svg>
<svg class="b" style="left:1574.0px;top:958.8px;" width="20" height="20" viewBox="1574 958.8 20 20"><circle cx="1584" cy="968.8" r="5.800" fill="none" stroke="#ffffff" stroke-width="2"/><circle cx="1584" cy="968.8" r="1.900" fill="#ffffff"/><circle cx="1591.50" cy="968.80" r="1.25" fill="#ffffff"/><circle cx="1589.30" cy="974.10" r="1.25" fill="#ffffff"/><circle cx="1584.00" cy="976.30" r="1.25" fill="#ffffff"/><circle cx="1578.70" cy="974.10" r="1.25" fill="#ffffff"/><circle cx="1576.50" cy="968.80" r="1.25" fill="#ffffff"/><circle cx="1578.70" cy="963.50" r="1.25" fill="#ffffff"/><circle cx="1584.00" cy="961.30" r="1.25" fill="#ffffff"/><circle cx="1589.30" cy="963.50" r="1.25" fill="#ffffff"/></svg>
<div class="b" style="left:1604px;top:954px;width:50px;height:30px;background:#9147ff;border-radius:4px;"></div>
<span class="t" style="left:1613.90px;top:961.02px;font-size:13.5px;line-height:18px;color:#ffffff;transform:scaleX(1.0001);font-weight:700;">Chat</span>
</aside>
</body></html>
